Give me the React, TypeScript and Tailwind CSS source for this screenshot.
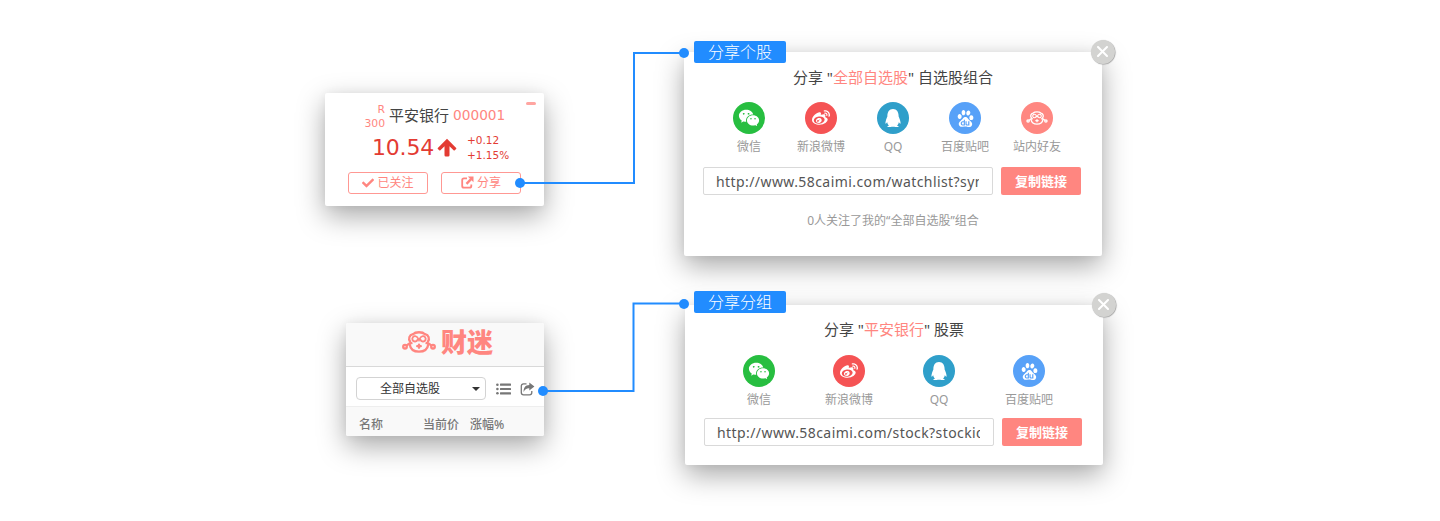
import type { ReactNode } from 'react';
import { FaQq, FaWeibo, FaCheck } from 'react-icons/fa';
import { RiWechatFill } from 'react-icons/ri';
import { SiBaidu } from 'react-icons/si';

const shadow = 'shadow-[0_10px_28px_rgba(0,0,0,0.34),0_0_10px_rgba(0,0,0,0.05)]';

function Monkey({ className, stroke = 2.3 }: { className: string; stroke?: number }) {
  return (
    <svg viewBox="0 0 34 22" className={className} fill="none" stroke="currentColor" strokeWidth={stroke} strokeLinecap="round">
      <path d="M8.200 10.800C6 7.500 7.300 4.200 11 3.200C13.500.6 20.500.6 23 3.200C26.700 4.200 28 7.500 25.800 10.800" />
      <path d="M15.500 8.600C15 11 11.500 11.200 10.500 9C9.700 7 11.300 4.800 13.400 5.200C15.500 5.500 16.200 7.500 17 9.200C17.800 7.500 18.500 5.500 20.600 5.200C22.700 4.800 24.300 7 23.500 9C22.500 11.200 19 11 18.500 8.600" strokeWidth={stroke * 0.8} />
      <path d="M5 14.300C6.500 12.500 7.200 11.800 9.500 12.200M29 14.300C27.500 12.500 26.800 11.800 24.500 12.200" />
      <path d="M7.700 13.500C8.500 18.500 12.500 20.700 17 20.700S25.500 18.500 26.300 13.500" />
      <circle cx="3" cy="15.700" r="1.800" />
      <circle cx="31" cy="15.700" r="1.800" />
      <path d="M15.200 15.200H18.800M17 13.600V16.800" />
    </svg>
  );
}

function ArrowUp() {
  return (
    <svg viewBox="0 0 20 20" className="h-5 w-5 fill-[#e33b33]">
      <path d="M10 .8L19.200 9.900Q19.600 10.400 19.100 10.900L17.800 12.200Q17.200 12.700 16.600 12.200L12.500 8.300V17.300Q12.500 18.600 11.200 18.600H8.800Q7.500 18.600 7.500 17.300V8.300L3.400 12.200Q2.800 12.700 2.200 12.200L.9 10.900Q.4 10.400.8 9.900Z" />
    </svg>
  );
}

function NewWindow() {
  return (
    <svg viewBox="0 0 13 13" className="h-[13px] w-[13px] fill-none stroke-current">
      <path d="M6 2.300H3Q1.200 2.300 1.200 4.100V10Q1.200 11.700 3 11.700H8.500Q10.300 11.700 10.300 10V8.500" strokeWidth="1.800" />
      <path d="M5.500 7.800L10 3.200" strokeWidth="2.400" />
      <path d="M6.800.5H12.500V6.200Z" fill="currentColor" stroke="none" />
    </svg>
  );
}

function ListIcon() {
  return (
    <svg viewBox="0 0 15 12" className="h-3 w-[15px] fill-[#777]">
      <circle cx="1.400" cy="1.700" r="1.300" />
      <circle cx="1.400" cy="6" r="1.300" />
      <circle cx="1.400" cy="10.300" r="1.300" />
      <rect x="4" y=".6" width="11" height="2.200" rx=".5" />
      <rect x="4" y="4.900" width="11" height="2.200" rx=".5" />
      <rect x="4" y="9.200" width="11" height="2.200" rx=".5" />
    </svg>
  );
}

function ShareIcon() {
  return (
    <svg viewBox="0 0 15 14" className="h-[14px] w-[15px]">
      <path d="M6.500 1.800H3.600Q1.300 1.800 1.300 4.100V10.500Q1.300 12.800 3.600 12.800H9.500Q11.800 12.800 11.800 10.500V9" fill="none" stroke="#777" strokeWidth="1.300" />
      <path d="M9.300.5L14.400 4.600L9.300 8.600V6.200C6.500 6.100 4.800 7.300 3.700 10C3.200 5.800 5.500 3 9.300 3Z" fill="#777" />
    </svg>
  );
}

function Close() {
  return (
    <span className="absolute -top-[12.500px] -right-[12.500px] flex h-6 w-6 items-center justify-center rounded-full bg-[#d3d3d1] shadow-[0.500px_0.500px_1px_#999]">
      <svg viewBox="0 0 11 11" className="h-[11px] w-[11px] stroke-white" strokeWidth="2" strokeLinecap="round">
        <path d="M1 1L10 10M10 1L1 10" />
      </svg>
    </span>
  );
}

type Channel = { name: string; bg: string; icon: ReactNode };

const channels: Channel[] = [
  { name: '微信', bg: 'bg-[#27be40]', icon: <RiWechatFill className="h-[22px] w-[22px]" /> },
  { name: '新浪微博', bg: 'bg-[#f55354]', icon: <FaWeibo className="h-[18px] w-[18px]" /> },
  { name: 'QQ', bg: 'bg-[#2f9fca]', icon: <FaQq className="h-[18px] w-[18px]" /> },
  { name: '百度贴吧', bg: 'bg-[#57a1f8]', icon: <SiBaidu className="h-[17px] w-[17px]" /> },
  { name: '站内好友', bg: 'bg-[#ff8781]', icon: <Monkey className="h-[14px] w-[22px]" stroke={2.1} /> },
];

function Channels({ items, cell }: { items: Channel[]; cell: string }) {
  return (
    <ul className="flex justify-center">
      {items.map((c) => (
        <li key={c.name} className={`flex flex-col items-center ${cell}`}>
          <span className={`flex h-8 w-8 items-center justify-center rounded-full text-white ${c.bg}`}>{c.icon}</span>
          <span className="mt-[3px] text-xs leading-[19px] whitespace-nowrap text-[#999]">{c.name}</span>
        </li>
      ))}
    </ul>
  );
}

function LinkRow({ url }: { url: string }) {
  return (
    <div className="flex gap-2">
      <div className="h-7 w-[290px] rounded-xs border border-[#d9d9d9] pr-[13px] pl-3">
        <div className="overflow-hidden text-sm leading-[27px] tracking-[0.420px] whitespace-nowrap text-[#555]">{url}</div>
      </div>
      <button className="h-7 w-20 rounded-xs bg-[#ff8680] pt-px text-[13px] font-bold text-white">复制链接</button>
    </div>
  );
}

function Tag({ children, className }: { children: ReactNode; className: string }) {
  return (
    <span className={`absolute h-[22px] w-[92px] rounded-xs bg-[#218cff] text-center text-base leading-[22px] font-light text-white ${className}`}>
      {children}
    </span>
  );
}

function StockCard() {
  return (
    <section className={`flex h-[113px] w-[219px] flex-col rounded-xs bg-white ${shadow}`}>
      <div className="flex h-[38px] pt-2 pl-[38px]">
        <div className="w-[22px] pt-[2px] text-right font-['DejaVu_Sans'] text-[10.800px] leading-[14.500px] text-[#ff8680]">
          <div>R</div>
          <div>300</div>
        </div>
        <div className="ml-1 text-[15px] leading-[28px] text-[#444]">平安银行</div>
        <div className="ml-1 font-['DejaVu_Sans'] text-[13.700px] leading-[29px] text-[#ff8680]">000001</div>
        <div className="mt-[1.500px] ml-[21px] h-[3px] w-[10px] rounded-xs bg-[#ffa5a1]" />
      </div>
      <div className="flex h-[34px] items-center pl-[47px] font-['DejaVu_Sans'] text-[#e33b33]">
        <span className="w-[65px] text-[22px] leading-8 tracking-[-0.200px]">10.54</span>
        <ArrowUp />
        <div className="ml-[10px] text-[10.500px] leading-[15px]">
          <div>+0.12</div>
          <div>+1.15%</div>
        </div>
      </div>
      <div className="flex gap-[13px] pt-[7px] pl-[23px] text-xs text-[#ff8680]">
        <button className="flex h-[22px] w-20 items-center justify-center gap-[3px] rounded-[3px] border border-[#ff9893]">
          <FaCheck className="h-3 w-3" />
          已关注
        </button>
        <button className="flex h-[22px] w-20 items-center justify-center gap-[3px] rounded-[3px] border border-[#ff9893]">
          <NewWindow />
          分享
        </button>
      </div>
    </section>
  );
}

function WatchlistCard() {
  return (
    <section className={`ml-[21px] h-[113px] w-[198px] overflow-hidden rounded-xs bg-white ${shadow}`}>
      <header className="flex h-11 items-center gap-[5px] border-b border-[#d9d9d9] bg-[#f9f9f9] pb-[5px] pl-14 text-[#ff8680]">
        <Monkey className="h-[22px] w-[34px]" />
        <span className="text-[26px] leading-8 font-black">财迷</span>
      </header>
      <div className="flex h-[39px] items-center pt-1 pl-[10px]">
        <div className="flex h-[23px] w-[130px] items-center justify-between rounded border border-[#d3d3d3] pr-[5px] pl-[23px] text-xs text-[#333]">
          全部自选股
          <svg viewBox="0 0 8 4" className="mt-px h-1 w-2 fill-[#333]"><path d="M0 0H8L4 4Z" /></svg>
        </div>
        <span className="mt-px ml-[10px]"><ListIcon /></span>
        <span className="mt-px ml-[9px]"><ShareIcon /></span>
      </div>
      <div className="flex h-[30px] border-t border-[#eee] bg-[#f9f9f9] pt-[2px] pl-[13px] text-xs leading-[31px] font-medium text-[#777]">
        <span className="w-[64px]">名称</span>
        <span className="w-[47px]">当前价</span>
        <span>涨幅%</span>
      </div>
    </section>
  );
}

export default function App() {
  return (
    <main className="relative flex h-[521px] w-[1440px] overflow-hidden bg-white pl-[325px] font-['Noto_Sans','Noto_Sans_CJK_SC',sans-serif]">
      <div className="flex w-[359px] flex-col gap-[117.500px] pt-[92.500px]">
        <StockCard />
        <WatchlistCard />
      </div>
      <div className="flex flex-col gap-[49px] pt-[52px]">
        <section className={`relative h-[204px] w-[418px] rounded-xs bg-white ${shadow}`}>
          <Tag className="-top-[11px] left-[10px]">分享个股</Tag>
          <Close />
          <h2 className="pt-[14px] text-center text-[15px] leading-[22px] text-[#444]">
            分享 "<span className="text-[#ff8680]">全部自选股</span>" 自选股组合
          </h2>
          <div className="pt-[14px]"><Channels items={channels} cell="w-[72px]" /></div>
          <div className="pt-[11px] pl-[19px]"><LinkRow url="http://www.58caimi.com/watchlist?symbol" /></div>
          <p className="pt-4 text-center text-xs leading-[19px] text-[#999]">0人关注了我的“全部自选股”组合</p>
        </section>
        <section className={`relative ml-px h-[160px] w-[418px] rounded-xs bg-white ${shadow}`}>
          <Tag className="-top-[14px] left-[9px]">分享分组</Tag>
          <Close />
          <h2 className="pt-[13px] text-center text-[15px] leading-[22px] text-[#444]">
            分享 "<span className="text-[#ff8680]">平安银行</span>" 股票
          </h2>
          <div className="pt-[15px]"><Channels items={channels.slice(0, 4)} cell="w-[90px]" /></div>
          <div className="pt-[9px] pl-[19px]"><LinkRow url="http://www.58caimi.com/stock?stockid=1" /></div>
        </section>
      </div>
      <svg className="pointer-events-none absolute inset-0 h-[521px] w-[1440px]" fill="none" stroke="#218cff" strokeWidth="2">
        <path d="M520 183H634V53H684M543 391H633.500V303.500H684" />
        <g fill="#218cff" stroke="none">
          <circle cx="520" cy="183" r="5" />
          <circle cx="684" cy="53" r="5" />
          <circle cx="543" cy="391" r="5" />
          <circle cx="684" cy="304" r="5" />
        </g>
      </svg>
    </main>
  );
}
